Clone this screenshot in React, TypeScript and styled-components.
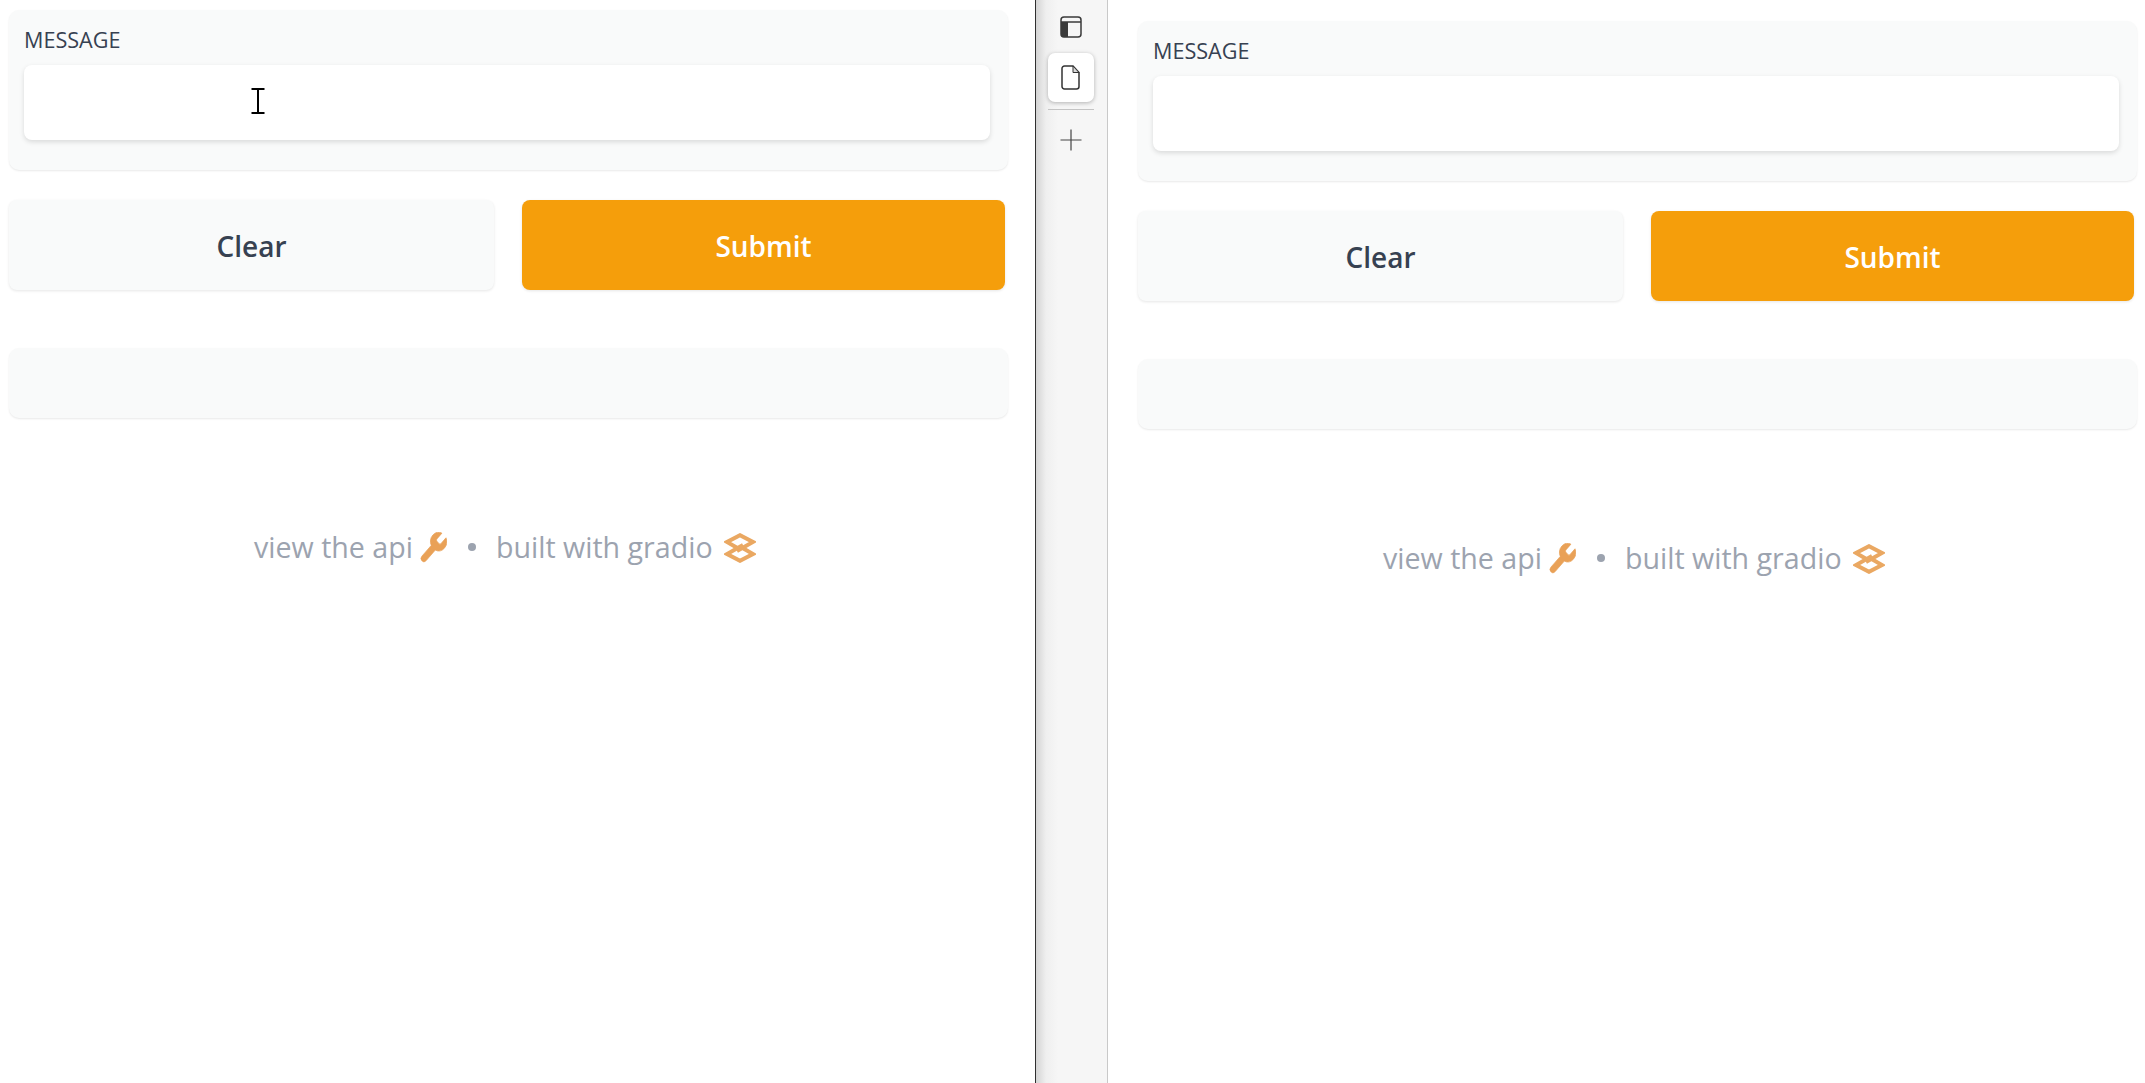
import React from 'react';
import styled, { createGlobalStyle } from 'styled-components';

const GlobalStyle = createGlobalStyle`
    html, body {
        margin: 0;
        padding: 0;
        background: #ffffff;
        font-family: "Open Sans", "Noto Sans", "Liberation Sans", sans-serif;
    }
`;

const Root = styled.div`
    display: flex;
    flex-direction: row;
    width: 2145px;
    height: 1083px;
    overflow: hidden;
    background: #ffffff;
`;

const Pane = styled.div<{ $width: number; $top: number; $left: number }>`
    width: ${(p) => p.$width}px;
    flex-shrink: 0;
    box-sizing: border-box;
    padding: ${(p) => p.$top}px 0 0 ${(p) => p.$left}px;
`;

const Form = styled.div`
    display: flex;
    flex-direction: column;
    width: 999px;
`;

const Panel = styled.div`
    box-sizing: border-box;
    height: 160px;
    padding: 15px 18px 0 15px;
    background: #f9fafa;
    border-radius: 10px;
    box-shadow: 0 1px 2px rgba(0, 0, 0, 0.09);
`;

const Label = styled.div`
    height: 40px;
    font-size: 21.6px;
    line-height: 30px;
    color: #374151;
`;

const InputBox = styled.div`
    position: relative;
    height: 75px;
    background: #ffffff;
    border-radius: 8px;
    box-shadow: 0 2px 5px rgba(0, 0, 0, 0.13);
`;

const TextCursor = styled.svg`
    position: absolute;
    left: 227px;
    top: 23px;
`;

const Actions = styled.div`
    display: grid;
    grid-template-columns: 485px 483px;
    column-gap: 28px;
    margin-top: 30px;
    height: 90px;
`;

const Button = styled.div<{ $primary?: boolean }>`
    display: flex;
    align-items: center;
    justify-content: center;
    box-sizing: border-box;
    padding-top: 2px;
    font-size: 28px;
    font-weight: 600;
    border-radius: 8px;
    color: ${(p) => (p.$primary ? '#ffffff' : '#374151')};
    background: ${(p) => (p.$primary ? '#f59e0b' : '#f9fafa')};
    box-shadow: 0 1px 3px rgba(0, 0, 0, 0.1);
`;

const OutputPanel = styled.div`
    height: 70px;
    margin-top: 58px;
    background: #f9fafa;
    border-radius: 10px;
    box-shadow: 0 1px 2px rgba(0, 0, 0, 0.09);
`;

const Footer = styled.div`
    display: flex;
    align-items: center;
    margin: 108px 0 0 245px;
    height: 40px;
    font-size: 28.6px;
    color: #9ca3af;
`;

const FooterText = styled.span`
    white-space: nowrap;
`;

const FooterDot = styled.span`
    width: 8px;
    height: 8px;
    margin: 2px 20px 0 21px;
    border-radius: 50%;
    background: #9ca3af;
`;

const WrenchIcon = styled.svg`
    margin: 3px 0 0 7px;
`;

const LogoIcon = styled.svg`
    margin: 3px 0 0 11px;
`;

const Divider = styled.div`
    width: 1px;
    flex-shrink: 0;
    background: #2f2f2f;
`;

const SideBar = styled.div`
    display: flex;
    flex-direction: column;
    align-items: center;
    box-sizing: border-box;
    width: 72px;
    flex-shrink: 0;
    padding: 16px 2px 0 0;
    background: linear-gradient(to right, #d4d4d4 0, #efefef 10px, #f6f6f6 22px);
    border-right: 1px solid #c9c9c9;
`;

const SideIcon = styled.div<{ $active?: boolean }>`
    display: flex;
    align-items: center;
    justify-content: center;
    width: 46px;
    height: ${(p) => (p.$active ? 49 : 21)}px;
    border-radius: 7px;
    background: ${(p) => (p.$active ? '#ffffff' : 'transparent')};
    box-shadow: ${(p) => (p.$active ? '0 1px 4px rgba(0, 0, 0, 0.28)' : 'none')};
`;

const SideSeparator = styled.div`
    width: 46px;
    height: 1px;
    margin: 7px 0 19px;
    background: #c4c4c4;
`;

const TabGap = styled.div`
    height: 16px;
`;

const MessageForm = ({ cursor }: { cursor?: boolean }) => {
    return (
        <Form>
            <Panel>
                <Label>MESSAGE</Label>
                <InputBox>
                    {cursor && (
                        <TextCursor width="14" height="26" viewBox="0 0 14 26">
                            <path d="M0.5 1h13M0.5 25h13M7 1v24" stroke="#000" strokeWidth="2" fill="none" />
                        </TextCursor>
                    )}
                </InputBox>
            </Panel>
            <Actions>
                <Button>Clear</Button>
                <Button $primary>Submit</Button>
            </Actions>
            <OutputPanel />
            <Footer>
                <FooterText>view the api</FooterText>
                <WrenchIcon width="27" height="31" viewBox="2.2 1.8 20 20" preserveAspectRatio="none">
                    <path
                        d="M14.7 6.3a1 1 0 0 0 0 1.4l1.6 1.6a1 1 0 0 0 1.4 0l3.77-3.77a6 6 0 0 1-7.94 7.94l-6.91 6.91a2.12 2.12 0 0 1-3-3l6.91-6.91a6 6 0 0 1 7.94-7.94l-3.76 3.76z"
                        fill="#e9a157"
                        stroke="#e9a157"
                        strokeWidth="0.5"
                    />
                </WrenchIcon>
                <FooterDot />
                <FooterText>built with gradio</FooterText>
                <LogoIcon width="32" height="30" viewBox="0 0 32 30">
                    <g fill="none" stroke="#eaa862" strokeWidth="4">
                        <path d="M13 14.7 3 9 16 2.2 29 9l-16 9" />
                        <path d="M19 15.3 29 21l-13 6.8L3 21l16-9" />
                    </g>
                </LogoIcon>
            </Footer>
        </Form>
    );
};

const App = () => {
    return (
        <Root>
            <GlobalStyle />
            <Pane $width={1035} $top={10} $left={9}>
                <MessageForm cursor />
            </Pane>
            <Divider />
            <SideBar>
                <SideIcon>
                    <svg width="22" height="22" viewBox="0 0 22 22">
                        <rect x="1" y="1" width="20" height="20" rx="3" fill="none" stroke="#3a3a3a" strokeWidth="1.5" />
                        <path d="M1 6h20" stroke="#3a3a3a" strokeWidth="1.5" />
                        <path d="M1 6h7v15H4a3 3 0 0 1-3-3z" fill="#3a3a3a" />
                    </svg>
                </SideIcon>
                <TabGap />
                <SideIcon $active>
                    <svg width="19" height="25" viewBox="0 0 19 25">
                        <path
                            d="M3.5 1H12l6 6.5V21.5a2.5 2.5 0 0 1-2.5 2.5h-12A2.5 2.5 0 0 1 1 21.5v-18A2.5 2.5 0 0 1 3.5 1z"
                            fill="none"
                            stroke="#333"
                            strokeWidth="1.5"
                        />
                        <path d="M12 1v6.5h6z" fill="#d8d8d8" stroke="#333" strokeWidth="1" />
                    </svg>
                </SideIcon>
                <SideSeparator />
                <svg width="22" height="22" viewBox="0 0 22 22">
                    <path d="M0.5 11h21M11 0.5v21" stroke="#444" strokeWidth="1.2" />
                </svg>
            </SideBar>
            <Pane $width={1037} $top={21} $left={30}>
                <MessageForm />
            </Pane>
        </Root>
    );
};

export default App;
